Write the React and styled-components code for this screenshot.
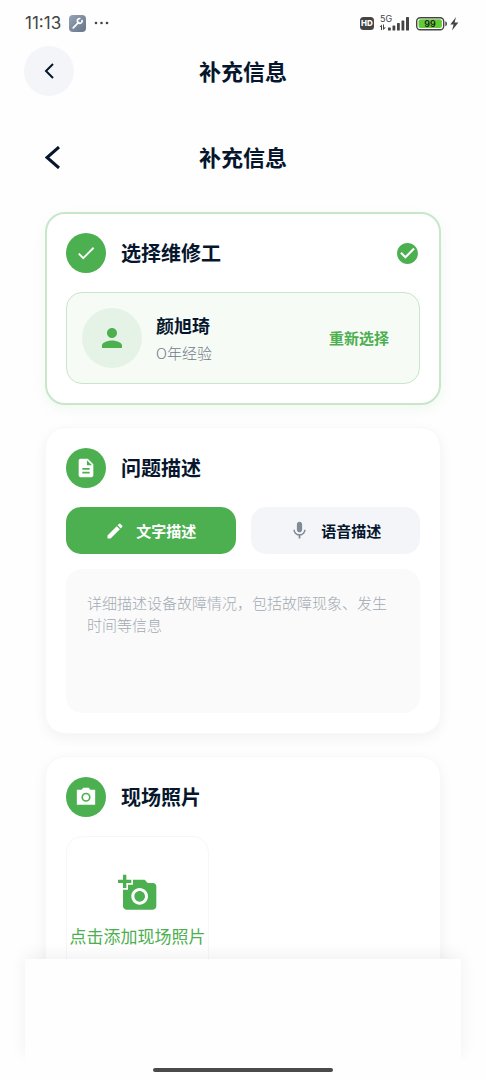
import styled, {createGlobalStyle} from 'styled-components'
import {useState} from 'react'
import {MdCheck, MdCheckCircle, MdPerson, MdDescription, MdEdit, MdMic, MdAddAPhoto} from 'react-icons/md'

const GlobalStyle = createGlobalStyle`
    * {
        box-sizing: border-box;
    }
    body {
        margin: 0;
        background: #fefefe;
        color: #05162d;
        font-family: "Noto Sans CJK SC", "Noto Sans", sans-serif;
    }
    button, textarea {
        font-family: inherit;
        border: none;
        margin: 0;
        padding: 0;
    }
    button {
        cursor: pointer;
    }
    svg {
        display: block;
        flex-shrink: 0;
    }
`

const Screen = styled.div`
    display: flex;
    flex-direction: column;
    height: 100vh;
    overflow: hidden;
`

const StatusBar = styled.div`
    display: flex;
    justify-content: space-between;
    align-items: center;
    height: 46px;
    padding: 0 26px 0 25px;
    color: #444;
`

const StatusGroup = styled.div`
    display: flex;
    align-items: center;
    gap: 8px;
`

const Clock = styled.span`
    font-family: Inter, sans-serif;
    font-size: 17px;
    line-height: 20px;
`

const Header = styled.header`
    display: grid;
    grid-template-columns: 50px 1fr 50px;
    align-items: center;
    height: 50px;
    padding: 0 24px;
    flex-shrink: 0;
`

const InnerHeader = styled(Header)`
    margin: 36px -18px 30px;
    padding: 0;
`

const BackButton = styled.button`
    display: flex;
    align-items: center;
    justify-content: center;
    width: 50px;
    height: 50px;
    border-radius: 25px;
    background: ${props => props.$filled ? '#f4f5f8' : 'transparent'};
    color: #05162d;
`

const Title = styled.h1`
    margin: 0;
    padding-bottom: 2px;
    text-align: center;
    font-size: 22px;
    line-height: 30px;
    font-weight: 700;
`

const Content = styled.main`
    flex: 1;
    min-height: 0;
    overflow: hidden;
    margin: 0 24px;
    padding: 0 21px;
`

const Card = styled.section`
    background: #fff;
    border: ${props => props.$active ? '2px solid #c8e6c9' : '1px solid #f8f8f9'};
    border-radius: 20px;
    padding: ${props => props.$active ? '19px' : '20px'};
    margin-bottom: 22px;
    box-shadow: 0 4px 14px ${props => props.$active ? 'rgba(76, 175, 80, 0.08)' : 'rgba(0, 0, 0, 0.05)'};
`

const CardHead = styled.div`
    display: flex;
    align-items: center;
    gap: 15px;
    margin-bottom: 19px;
`

const RoundIcon = styled.span`
    display: flex;
    align-items: center;
    justify-content: center;
    width: 40px;
    height: 40px;
    border-radius: 20px;
    background: #4caf50;
    color: #fff;
`

const CardTitle = styled.h2`
    flex: 1;
    margin: 0;
    font-size: 20px;
    line-height: 28px;
    font-weight: 700;
`

const Worker = styled.div`
    display: flex;
    align-items: center;
    gap: 14px;
    padding: 15px;
    border: 1px solid #c8e6c9;
    border-radius: 16px;
    background: #f6fbf6;
`

const Avatar = styled.span`
    display: flex;
    align-items: center;
    justify-content: center;
    width: 60px;
    height: 60px;
    border-radius: 30px;
    background: #e4f3e5;
    color: #4caf50;
`

const WorkerInfo = styled.div`
    flex: 1;
`

const WorkerName = styled.div`
    font-size: 18px;
    line-height: 26px;
    font-weight: 700;
`

const WorkerYears = styled.div`
    margin-top: 4px;
    font-size: 15px;
    line-height: 22px;
    font-weight: 300;
    color: #6f7a88;
`

const LinkButton = styled.button`
    padding: 8px 15px;
    background: transparent;
    color: #4caf50;
    font-size: 15px;
    line-height: 22px;
    font-weight: 700;
`

const Tabs = styled.div`
    display: grid;
    grid-template-columns: 1fr 1fr;
    gap: 15px;
    margin-bottom: 15px;
`

const Tab = styled.button`
    display: flex;
    align-items: center;
    justify-content: center;
    gap: 11px;
    height: 47px;
    border-radius: 15px;
    background: ${props => props.$active ? '#4caf50' : '#f4f5f8'};
    color: ${props => props.$active ? '#fff' : '#05162d'};
    font-size: 15px;
    font-weight: 700;

    svg {
        color: ${props => props.$active ? '#fff' : '#7f8b98'};
    }
`

const Description = styled.textarea`
    display: block;
    width: 100%;
    height: 144px;
    padding: 23px 21px;
    border-radius: 16px;
    background: #fafafa;
    color: #05162d;
    font-size: 15px;
    line-height: 22px;
    resize: none;
    outline: none;

    &::placeholder {
        color: #a3aab3;
        font-weight: 300;
        opacity: 1;
    }
`

const AddPhoto = styled.button`
    display: flex;
    flex-direction: column;
    align-items: center;
    justify-content: center;
    gap: 10px;
    width: 143px;
    height: 149px;
    border: 1px solid #f7f7f7;
    border-radius: 16px;
    background: #fff;
    color: #4caf50;
    font-size: 17px;
    line-height: 26px;
    font-weight: 400;
    white-space: nowrap;
`

const Footer = styled.footer`
    position: relative;
    flex-shrink: 0;
    height: 101px;
    margin: 0 25px;
    background: #fefefe;
    box-shadow: 0 -4px 16px rgba(0, 0, 0, 0.06);
`

const HomeArea = styled.div`
    position: relative;
    display: flex;
    justify-content: center;
    flex-shrink: 0;
    height: 20px;
    padding-top: 8px;
    background: #fefefe;
`

const HomeBar = styled.span`
    width: 180px;
    height: 4px;
    border-radius: 2px;
    background: #4a4a4a;
`

const SmallText = styled.text`
    font-family: Inter, sans-serif;
    font-size: ${props => props.$size}px;
    font-weight: ${props => props.$weight};
`

function Chevron({width, height, stroke}) {
    return (
        <svg width={width} height={height} viewBox={`0 0 ${width} ${height}`} fill="none" stroke="currentColor" strokeWidth={stroke}>
            <path d={`M${width - 1} 1L2 ${height / 2}L${width - 1} ${height - 1}`} />
        </svg>
    )
}

function CameraIcon() {
    return (
        <svg width="22" height="22" viewBox="0 0 24 24" fill="currentColor">
            <path fillRule="evenodd" d="M2 4H7.2L9 2H15L16.8 4H22V20.5H2ZM12 7.3A5 5 0 1 0 12 17.3A5 5 0 1 0 12 7.3Z" />
            <circle cx="12" cy="12.3" r="3.2" />
        </svg>
    )
}

function ToolIcon() {
    return (
        <svg width="17" height="17" viewBox="0 0 17 17">
            <defs>
                <linearGradient id="tool" x1="0" y1="0" x2="1" y2="1">
                    <stop offset="0" stopColor="#94a3b4" />
                    <stop offset="1" stopColor="#66758a" />
                </linearGradient>
            </defs>
            <rect width="17" height="17" rx="4" fill="url(#tool)" />
            <path d="M4.2 12.8L9.6 7.4" stroke="#fff" strokeWidth="1.7" strokeLinecap="round" />
            <path d="M13.1 5.6A2.4 2.4 0 1 1 10.8 3.5" stroke="#fff" strokeWidth="1.7" fill="none" strokeLinecap="round" />
        </svg>
    )
}

function Dots() {
    return (
        <svg width="15" height="4" viewBox="0 0 15 4" fill="#444">
            <circle cx="2" cy="2" r="1.3" />
            <circle cx="7.5" cy="2" r="1.3" />
            <circle cx="13" cy="2" r="1.3" />
        </svg>
    )
}

function SignalIcons() {
    return (
        <svg width="100" height="20" viewBox="0 0 100 20" fill="#444">
            <rect x="0" y="4" width="14" height="13" rx="3.5" />
            <SmallText $size={8} $weight={800} x="7" y="13.4" textAnchor="middle" fill="#fff">HD</SmallText>
            <SmallText $size={9} $weight={400} x="20" y="9">5G</SmallText>
            <path d="M19.5 14L22 11.5V17H21V14ZM23 11.5H24V14.5H26L23 17Z" />
            <rect x="28" y="14.5" width="2.8" height="3" rx="0.6" />
            <rect x="32.5" y="12.5" width="2.8" height="5" rx="0.6" />
            <rect x="37" y="10" width="2.8" height="7.5" rx="0.6" />
            <rect x="41.5" y="7.5" width="2.8" height="10" rx="0.6" />
            <rect x="46" y="4" width="3" height="13.5" rx="0.6" />
            <rect x="56.7" y="4.7" width="27" height="12" rx="3.5" fill="#fff" stroke="#444" strokeWidth="1.4" />
            <rect x="58.5" y="6.3" width="23.4" height="8.8" rx="2" fill="#62cc35" />
            <SmallText $size={9} $weight={600} x="70" y="14" textAnchor="middle" fill="#222">99</SmallText>
            <path d="M85.3 8.3Q87 8.5 87 10.7Q87 13 85.3 13.2Z" />
            <path d="M96 4L90.3 11.4H93.6L92 17.5L98.4 9.5H94.6Z" />
        </svg>
    )
}

function App() {

    const [mode, setMode] = useState("text");
    const [description, setDescription] = useState("");

    return (
    <Screen>
        <GlobalStyle />
        <StatusBar>
            <StatusGroup>
                <Clock>11:13</Clock>
                <ToolIcon />
                <Dots />
            </StatusGroup>
            <SignalIcons />
        </StatusBar>

        <Header>
            <BackButton $filled aria-label="返回"><Chevron width={10} height={16} stroke={2} /></BackButton>
            <Title>补充信息</Title>
        </Header>

        <Content>
            <InnerHeader>
                <BackButton aria-label="返回"><Chevron width={15} height={23} stroke={3} /></BackButton>
                <Title as="h2">补充信息</Title>
            </InnerHeader>

            <Card $active>
                <CardHead>
                    <RoundIcon><MdCheck size={22} /></RoundIcon>
                    <CardTitle>选择维修工</CardTitle>
                    <MdCheckCircle size={25} color="#4caf50" />
                </CardHead>
                <Worker>
                    <Avatar><MdPerson size={30} /></Avatar>
                    <WorkerInfo>
                        <WorkerName>颜旭琦</WorkerName>
                        <WorkerYears>O年经验</WorkerYears>
                    </WorkerInfo>
                    <LinkButton>重新选择</LinkButton>
                </Worker>
            </Card>

            <Card>
                <CardHead>
                    <RoundIcon><MdDescription size={22} /></RoundIcon>
                    <CardTitle>问题描述</CardTitle>
                </CardHead>
                <Tabs>
                    <Tab $active={mode === "text"} onClick={() => setMode("text")}><MdEdit size={20} />文字描述</Tab>
                    <Tab $active={mode === "voice"} onClick={() => setMode("voice")}><MdMic size={21} />语音描述</Tab>
                </Tabs>
                <Description
                    aria-label="问题描述"
                    placeholder="详细描述设备故障情况，包括故障现象、发生时间等信息"
                    value={description}
                    onChange={(e) => setDescription(e.target.value)}
                />
            </Card>

            <Card>
                <CardHead>
                    <RoundIcon><CameraIcon /></RoundIcon>
                    <CardTitle>现场照片</CardTitle>
                </CardHead>
                <AddPhoto><MdAddAPhoto size={40} />点击添加现场照片</AddPhoto>
            </Card>
        </Content>

        <Footer />
        <HomeArea><HomeBar /></HomeArea>
    </Screen>
  );
}

export default App;
